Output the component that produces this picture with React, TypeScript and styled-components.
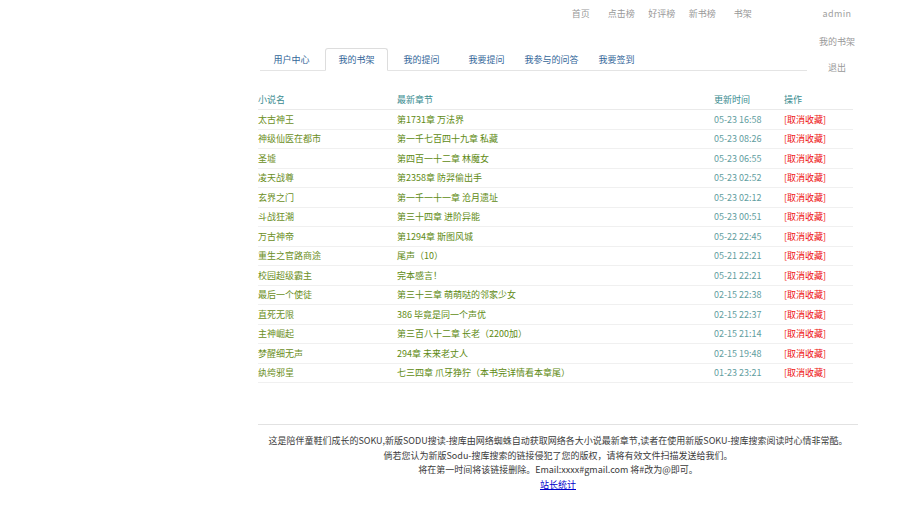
import React from 'react';
import styled, { createGlobalStyle } from 'styled-components';

const GlobalStyle = createGlobalStyle`
  html, body {
    margin: 0;
    padding: 0;
    background: #fff;
  }
  body {
    font-family: "Noto Sans CJK SC", "Liberation Sans", sans-serif;
    font-size: 9px;
    color: #333;
  }
`;

const Header = styled.header`
  display: flex;
  justify-content: flex-end;
  align-items: flex-start;
  height: 28px;
  padding-right: 33px;
`;

const NavLinks = styled.nav`
  display: flex;
`;

const NavLink = styled.a`
  width: 40.5px;
  height: 28px;
  line-height: 28px;
  text-align: center;
  color: #999;
  text-decoration: none;
`;

const UserBox = styled.div`
  position: relative;
  width: 60px;
  margin-left: 44px;
`;

const UserName = styled.div`
  height: 28px;
  line-height: 28px;
  text-align: center;
  color: #a0a0a0;
  letter-spacing: 0.4px;
`;

const Dropdown = styled.ul`
  position: absolute;
  top: 29px;
  left: 0;
  right: 0;
  margin: 0;
  padding: 0;
  list-style: none;
  background: #fff;
`;

const DropItem = styled.li`
  height: 26px;
  line-height: 26px;
  text-align: center;
  color: #999;
`;

const Main = styled.main`
  width: 600px;
  margin: 20px 0 0 258px;
`;

const Tabs = styled.div`
  display: flex;
  width: 549px;
  margin-left: 2px;
  border-bottom: 1px solid #e4e4e4;
`;

const Tab = styled.div<{ $active?: boolean }>`
  width: 61px;
  height: 21px;
  line-height: 21px;
  margin-right: 2px;
  margin-bottom: -1px;
  text-align: center;
  white-space: nowrap;
  color: #336699;
  background: ${(p) => (p.$active ? '#fff' : 'transparent')};
  border: 1px solid ${(p) => (p.$active ? '#ddd' : 'transparent')};
  border-bottom-color: ${(p) => (p.$active ? '#fff' : 'transparent')};
  border-radius: 3px 3px 0 0;
`;

const Table = styled.table`
  width: 595px;
  margin-top: 19px;
  border-collapse: collapse;
  table-layout: fixed;
`;

const Th = styled.th<{ $w: number }>`
  width: ${(p) => p.$w}px;
  height: 19px;
  padding: 0;
  text-align: left;
  font-weight: normal;
  color: #3a8c90;
  border-bottom: 1px solid #eaeaea;
`;

const Row = styled.tr`
  height: 19.5px;
  border-bottom: 1px solid #f0f0f0;
`;

const Td = styled.td<{ $tone: 'name' | 'chapter' | 'time' | 'op' }>`
  padding: 0;
  white-space: nowrap;
  color: ${(p) =>
    p.$tone === 'name'
      ? '#6b8e23'
      : p.$tone === 'chapter'
      ? '#5e8a12'
      : p.$tone === 'time'
      ? '#5f9ea0'
      : '#ee1111'};
`;

const Footer = styled.footer`
  width: 600px;
  margin: 41px 0 0 258px;
  padding-top: 9px;
  border-top: 1px solid #e2e2e2;
  text-align: center;
  line-height: 14.5px;
  color: #3a3a3a;
`;

const FooterLink = styled.a`
  color: #0000cc;
  text-decoration: underline;
`;

const books = [
  ['太古神王', '第1731章 万法界', '05-23 16:58'],
  ['神级仙医在都市', '第一千七百四十九章 私藏', '05-23 08:26'],
  ['圣墟', '第四百一十二章 林魔女', '05-23 06:55'],
  ['凌天战尊', '第2358章 防羿偷出手', '05-23 02:52'],
  ['玄界之门', '第一千一十一章 沧月遗址', '05-23 02:12'],
  ['斗战狂潮', '第三十四章 进阶异能', '05-23 00:51'],
  ['万古神帝', '第1294章 斯图风城', '05-22 22:45'],
  ['重生之官路商途', '尾声（10）', '05-21 22:21'],
  ['校园超级霸主', '完本感言！', '05-21 22:21'],
  ['最后一个使徒', '第三十三章 萌萌哒的邻家少女', '02-15 22:38'],
  ['直死无限', '386 毕竟是同一个声优', '02-15 22:37'],
  ['主神崛起', '第三百八十二章 长老（2200加）', '02-15 21:14'],
  ['梦醒细无声', '294章 未来老丈人', '02-15 19:48'],
  ['纨绔邪皇', '七三四章 爪牙狰狞（本书完详情看本章尾）', '01-23 23:21'],
];

const navItems = ['首页', '点击榜', '好评榜', '新书榜', '书架'];
const tabs = ['用户中心', '我的书架', '我的提问', '我要提问', '我参与的问答', '我要签到'];

export default function App() {
  return (
    <>
      <GlobalStyle />
      <Header>
        <NavLinks>
          {navItems.map((n) => (
            <NavLink key={n}>{n}</NavLink>
          ))}
        </NavLinks>
        <UserBox>
          <UserName>admin</UserName>
          <Dropdown>
            <DropItem>我的书架</DropItem>
            <DropItem>退出</DropItem>
          </Dropdown>
        </UserBox>
      </Header>
      <Main>
        <Tabs>
          {tabs.map((t) => (
            <Tab key={t} $active={t === '我的书架'}>
              {t}
            </Tab>
          ))}
        </Tabs>
        <Table>
          <thead>
            <tr>
              <Th $w={139}>小说名</Th>
              <Th $w={317}>最新章节</Th>
              <Th $w={70}>更新时间</Th>
              <Th $w={69}>操作</Th>
            </tr>
          </thead>
          <tbody>
            {books.map(([name, chapter, time]) => (
              <Row key={name}>
                <Td $tone="name">{name}</Td>
                <Td $tone="chapter">{chapter}</Td>
                <Td $tone="time">{time}</Td>
                <Td $tone="op">[取消收藏]</Td>
              </Row>
            ))}
          </tbody>
        </Table>
      </Main>
      <Footer>
        <div>
          这是陪伴童鞋们成长的SOKU,新版SODU搜读-搜库由网络蜘蛛自动获取网络各大小说最新章节,读者在使用新版SOKU-搜库搜索阅读时心情非常酷。
        </div>
        <div>倘若您认为新版Sodu-搜库搜索的链接侵犯了您的版权，请将有效文件扫描发送给我们。</div>
        <div>将在第一时间将该链接删除。Email:xxxx#gmail.com 将#改为@即可。</div>
        <div>
          <FooterLink href="#">站长统计</FooterLink>
        </div>
      </Footer>
    </>
  );
}
